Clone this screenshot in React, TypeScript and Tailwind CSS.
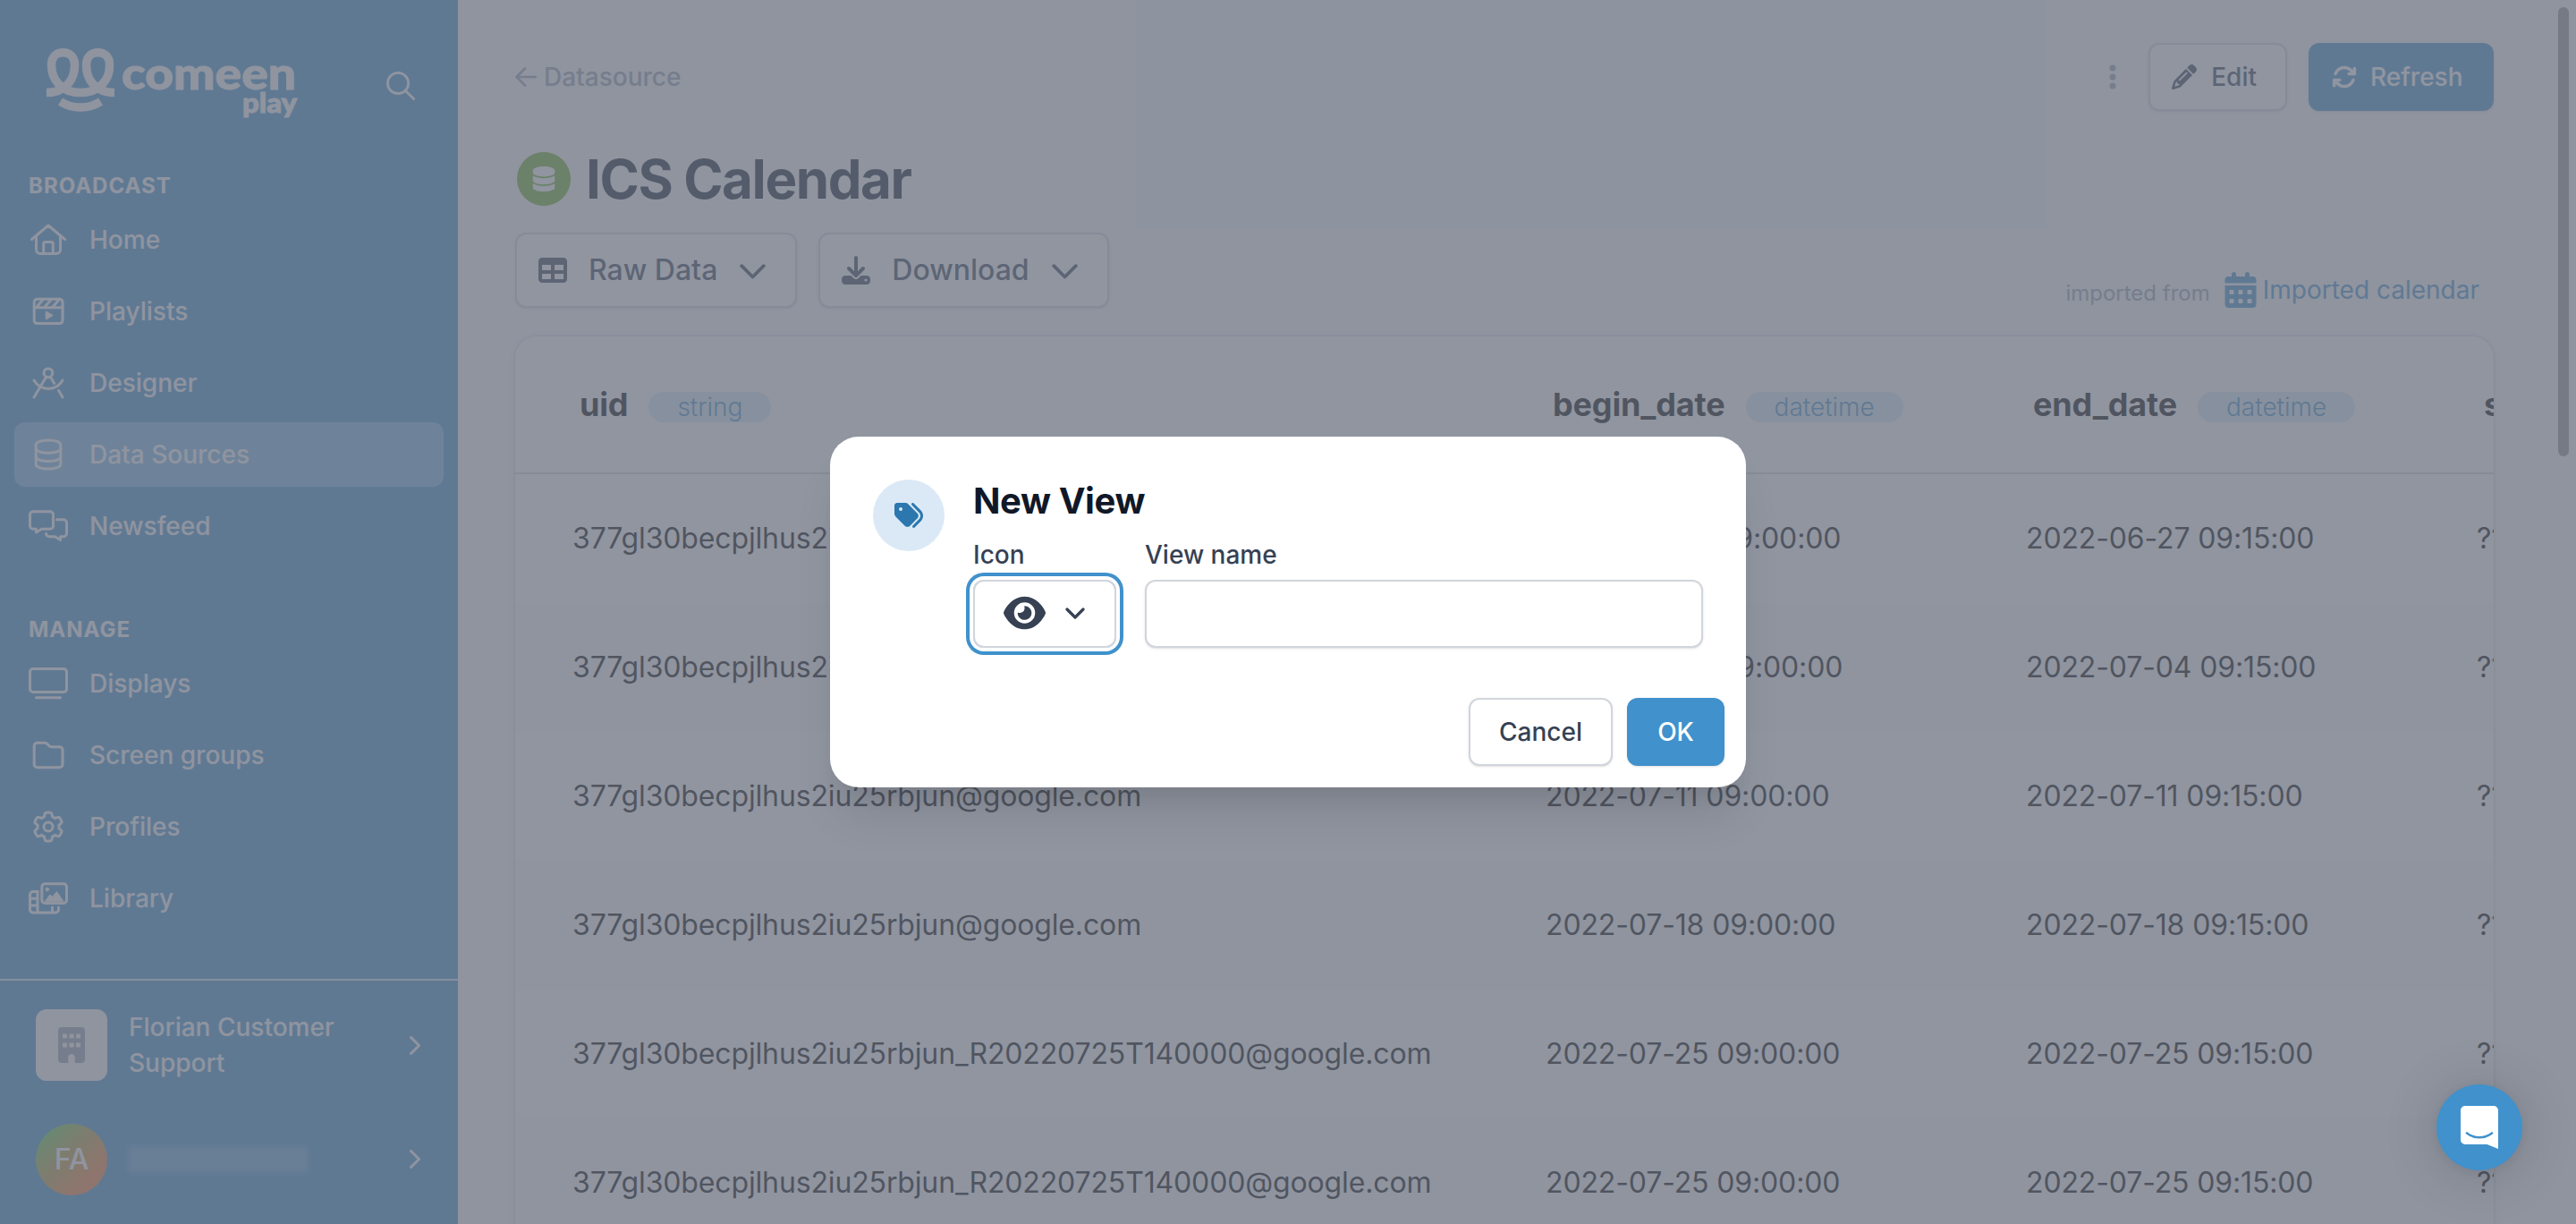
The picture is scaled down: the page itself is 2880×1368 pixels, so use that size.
import { ReactNode } from "react";
import {
  FaArrowsRotate,
  FaBuilding,
  FaCalendarDays,
  FaDatabase,
  FaDownload,
  FaEllipsisVertical,
  FaEye,
  FaGear,
  FaPencil,
  FaTable,
  FaTags,
} from "react-icons/fa6";

type NavItem = { label: string; icon: ReactNode; active?: boolean };

const broadcast: NavItem[] = [
  { label: "Home", icon: <HomeIcon /> },
  { label: "Playlists", icon: <ClapperIcon /> },
  { label: "Designer", icon: <CompassIcon /> },
  { label: "Data Sources", icon: <DatabaseIcon />, active: true },
  { label: "Newsfeed", icon: <MessagesIcon /> },
];

const manage: NavItem[] = [
  { label: "Displays", icon: <DisplayIcon /> },
  { label: "Screen groups", icon: <FolderIcon /> },
  {
    label: "Profiles",
    icon: (
      <FaGear
        className="size-8 overflow-visible"
        fill="none"
        strokeWidth={48}
      />
    ),
  },
  { label: "Library", icon: <LibraryIcon /> },
];

const columns = [
  { name: "uid", type: "string", width: "w-[1088px]" },
  { name: "begin_date", type: "datetime", width: "w-[537px]" },
  { name: "end_date", type: "datetime", width: "w-[504px]" },
  { name: "summary", type: "string", width: "w-[600px]" },
];

const shortUid = "377gl30becpjlhus2iu25rbjun@google.com";
const longUid = "377gl30becpjlhus2iu25rbjun_R20220725T140000@google.com";

const rows = [
  { uid: shortUid, date: "2022-06-27" },
  { uid: shortUid, date: "2022-07-04" },
  { uid: shortUid, date: "2022-07-11" },
  { uid: shortUid, date: "2022-07-18" },
  { uid: longUid, date: "2022-07-25" },
  { uid: longUid, date: "2022-07-25" },
];

export default function App() {
  return (
    <div className="relative flex h-[1368px] w-[2880px] overflow-hidden bg-gray-50 font-[Inter,sans-serif]">
      <Sidebar />
      <Main />
      <div className="absolute inset-0 flex items-center justify-center bg-[#6b7280]/75">
        <NewViewDialog />
      </div>
      <ChatLauncher />
    </div>
  );
}

function Sidebar() {
  return (
    <aside className="flex w-[512px] shrink-0 flex-col bg-[#4091cc] text-gray-50">
      <div className="flex h-[188px] items-start justify-between pt-[46px] pr-12 pl-[52px]">
        <Logo />
        <svg
          className="mt-[34px] size-8"
          viewBox="0 0 32 32"
          fill="none"
          stroke="currentColor"
          strokeWidth="2.8"
          strokeLinecap="round"
        >
          <circle cx="13" cy="13" r="11.6" />
          <path d="m21.4 21.4 9.2 9.2" />
        </svg>
      </div>

      <NavSection title="BROADCAST" items={broadcast} />
      <div className="h-[60px]" />
      <NavSection title="MANAGE" items={manage} />

      <div className="mt-auto border-t-2 border-[#cce2f5]">
        <div className="flex h-[144px] items-center pr-[42px] pl-10">
          <div className="flex size-20 items-center justify-center rounded-xl bg-gray-50 text-gray-400">
            <FaBuilding className="size-10" />
          </div>
          <p className="ml-6 w-[280px] text-[28px] leading-10 font-medium">
            Florian Customer Support
          </p>
          <Chevron className="ml-auto h-[21px] w-3" />
        </div>
        <div className="flex h-[128px] items-start pt-4 pr-[42px] pl-10">
          <div className="flex size-20 items-center justify-center rounded-full bg-linear-135 from-[#3fd04a] from-10% via-[#b89a3c] via-45% to-[#f5803a] to-75% text-[32px] font-medium">
            FA
          </div>
          <div className="mt-[26px] ml-6 h-7 w-[200px] bg-white/20 blur-[3px]" />
          <Chevron className="mt-[29px] ml-auto h-[21px] w-3" />
        </div>
      </div>
    </aside>
  );
}

function NavSection({ title, items }: { title: string; items: NavItem[] }) {
  return (
    <nav className="px-4">
      <h2 className="h-11 px-4 text-2xl leading-10 font-bold tracking-[1px]">
        {title}
      </h2>
      <ul className="flex flex-col gap-2">
        {items.map((item) => (
          <li
            key={item.label}
            className={`flex h-[72px] items-center rounded-xl px-4 text-[28px] font-medium ${
              item.active ? "bg-[#79b8e8]" : ""
            }`}
          >
            <span className="flex w-11 justify-center">{item.icon}</span>
            <span className="ml-6">{item.label}</span>
          </li>
        ))}
      </ul>
    </nav>
  );
}

function Main() {
  return (
    <main className="flex min-w-0 flex-1 px-16 pt-12">
      <div className="w-[2212px] shrink-0">
        <div className="flex h-[76px] items-center">
          <a className="flex items-center gap-2 text-[28px] font-medium text-gray-400">
            <svg
              className="h-[22px] w-6"
              viewBox="0 0 24 22"
              fill="none"
              stroke="currentColor"
              strokeWidth="2.6"
              strokeLinecap="round"
              strokeLinejoin="round"
            >
              <path d="M22.7 11H1.5M11 1.5 1.5 11l9.5 9.5" />
            </svg>
            Datasource
          </a>
          <FaEllipsisVertical className="ml-auto size-8 text-gray-400" />
          <button className="ml-6 flex h-[76px] items-center rounded-xl border-2 border-gray-300 bg-white px-6 text-[28px] font-medium text-gray-700 shadow-sm">
            <FaPencil className="size-7" />
            <span className="mr-2 ml-4">Edit</span>
          </button>
          <button className="ml-6 flex h-[76px] w-[207px] items-center rounded-xl bg-[#4091cc] pl-[26px] text-[28px] font-medium text-white shadow-sm">
            <FaArrowsRotate className="size-7" />
            <span className="ml-[15px]">Refresh</span>
          </button>
        </div>

        <div className="mt-[38px] flex h-[76px] items-center">
          <span className="ml-0.5 flex size-[60px] items-center justify-center rounded-full bg-[#6cae24] text-white">
            <FaDatabase className="size-7" />
          </span>
          <h1 className="ml-[17px] text-[60px] leading-none font-bold tracking-[-1.4px] text-gray-900">
            ICS Calendar
          </h1>
        </div>

        <div className="mt-[22px] flex h-[84px] items-start">
          <DropdownButton
            icon={<FaTable className="size-8" />}
            label="Raw Data"
          />
          <span className="w-6" />
          <DropdownButton
            icon={<FaDownload className="size-8" />}
            label="Download"
          />
          <div className="mt-11 mr-4 ml-auto flex h-10 items-center">
            <span className="mt-[7px] text-2xl text-gray-400">
              imported from
            </span>
            <a className="ml-[14px] flex items-center text-[28px] text-[#4091cc]">
              <FaCalendarDays className="size-10" />
              <span className="ml-[5px]">Imported calendar</span>
            </a>
          </div>
        </div>

        <div className="mt-8 h-[1100px] overflow-hidden rounded-t-3xl bg-white shadow-[0_2px_8px_rgba(0,0,0,0.08)] ring-2 ring-black/5">
          <DataTable />
        </div>
      </div>
      <div className="mt-[-40px] ml-[72px] h-[502px] w-3 shrink-0 rounded-full bg-[#929292]" />
    </main>
  );
}

function DropdownButton({ icon, label }: { icon: ReactNode; label: string }) {
  return (
    <button className="flex h-[84px] items-center rounded-xl border-2 border-gray-300 bg-white pr-[33px] pl-6 text-[32px] font-medium text-gray-700 shadow-sm">
      {icon}
      <span className="mr-[25px] ml-6">{label}</span>
      <svg
        className="mt-0.5 h-[17px] w-[29px]"
        viewBox="0 0 29 17"
        fill="none"
        stroke="currentColor"
        strokeWidth="3.8"
        strokeLinecap="round"
        strokeLinejoin="round"
      >
        <path d="m2.2 2.2 12.3 12.3L26.8 2.2" />
      </svg>
    </button>
  );
}

function DataTable() {
  return (
    <div className="w-[2729px] text-black">
      <div className="flex h-[154px] items-center border-b-2 border-gray-300">
        {columns.map((column) => (
          <div
            key={column.name}
            className={`flex shrink-0 items-baseline pl-[72px] text-4xl font-bold tracking-[-0.15px] ${column.width}`}
          >
            {column.name}
            <span className="ml-[23px] rounded-full bg-[#d9eaf6] px-8 text-[28px] leading-[34px] font-light tracking-normal text-[#4091cc]">
              {column.type}
            </span>
          </div>
        ))}
      </div>
      {rows.map((row, i) => (
        <div
          key={i}
          className="flex h-36 items-center text-[32px] tracking-[-0.14px] odd:bg-gray-50 even:bg-white"
        >
          <div className="w-[1088px] shrink-0 pl-16">{row.uid}</div>
          <div className="w-[537px] shrink-0 pl-16">{row.date} 09:00:00</div>
          <div className="w-[504px] shrink-0 pl-16">{row.date} 09:15:00</div>
          <div className="w-[600px] shrink-0 pl-16">??</div>
        </div>
      ))}
    </div>
  );
}

function NewViewDialog() {
  return (
    <div className="flex h-[392px] w-[1024px] flex-col rounded-[32px] bg-white shadow-[0_40px_50px_-10px_rgba(0,0,0,0.1),0_20px_20px_-10px_rgba(0,0,0,0.06)]">
      <div className="flex gap-8 px-12 pt-12">
        <div className="flex size-20 shrink-0 items-center justify-center rounded-full bg-[#dbe9f6] text-[#2b77ae]">
          <FaTags className="size-8" />
        </div>
        <div className="flex-1">
          <h3 className="text-[40px] leading-[48px] font-bold tracking-[-0.4px] text-gray-900">
            New View
          </h3>
          <div className="mt-4 flex gap-8 text-[28px] leading-10 font-medium text-gray-700">
            <div className="w-40">
              <p>Icon</p>
              <button className="mt-2 flex h-[76px] w-40 items-center rounded-xl border-2 border-gray-300 pb-0.5 pl-8 ring-4 ring-[#4091cc] ring-offset-4">
                <FaEye className="h-[42px] w-[47px]" />
                <svg
                  className="ml-[22px] h-[13px] w-[22px]"
                  viewBox="0 0 22 13"
                  fill="none"
                  stroke="currentColor"
                  strokeWidth="3.2"
                  strokeLinecap="round"
                  strokeLinejoin="round"
                >
                  <path d="m2 2 9 9 9-9" />
                </svg>
              </button>
            </div>
            <div className="flex-1">
              <p>View name</p>
              <input className="mt-2 block h-[76px] w-full rounded-xl border-2 border-gray-300 bg-white px-6 shadow-sm" />
            </div>
          </div>
        </div>
      </div>
      <div className="mt-auto flex justify-end gap-4 px-6 pb-6 text-[28px] font-medium">
        <button className="h-[76px] w-[161px] rounded-xl border-2 border-gray-300 bg-white text-gray-700 shadow-sm">
          Cancel
        </button>
        <button className="h-[76px] w-[109px] rounded-xl bg-[#4091cc] text-white shadow-sm">
          OK
        </button>
      </div>
    </div>
  );
}

function ChatLauncher() {
  return (
    <div className="absolute right-[60px] bottom-[60px] flex size-24 items-center justify-center rounded-full bg-[#4091cc] shadow-[0_2px_12px_rgba(0,0,0,0.06),0_4px_64px_rgba(0,0,0,0.16)]">
      <svg className="h-12 w-[42px]" viewBox="0 0 42 48">
        <path
          d="M5 0h32a5 5 0 0 1 5 5v43l-12.5-5H5a5 5 0 0 1-5-5V5a5 5 0 0 1 5-5Z"
          fill="#fff"
        />
        <path
          d="M7 30.5c8 6.3 20 6.3 28 0"
          fill="none"
          stroke="#4091cc"
          strokeWidth="2.6"
          strokeLinecap="round"
        />
      </svg>
    </div>
  );
}

function Logo() {
  return (
    <svg
      className="h-[96px] w-[284px] overflow-visible"
      viewBox="0 0 284 96"
      fill="currentColor"
      stroke="currentColor"
    >
      <g fill="none" strokeWidth="9.5">
        <path d="M0 57.5c10 0 18-3 24-9.500 5.500-6 7.500-12 7.500-21.500C31.500 17.500 26 12.700 18.500 12.700S5.500 17.500 5.500 26.500 8 42 13.500 48c6 6.500 14 9.500 24.500 9.500S56.500 54.500 62.500 48 70.500 36 70.500 26.500 65 12.700 57.500 12.700 44.500 17.500 44.500 26.500 46.500 42 52 48c6 6.500 14 9.500 24 9.500" />
        <path d="M15.5 67.5c14 8.800 31 8.800 45 0" />
      </g>
      <g fontFamily="Lato" fontWeight="900" strokeWidth="1">
        <text
          x="84"
          y="54"
          fontSize="50"
          textLength="195"
          lengthAdjust="spacingAndGlyphs"
        >
          comeen
        </text>
        <text
          x="219"
          y="80"
          fontSize="31"
          textLength="61"
          lengthAdjust="spacingAndGlyphs"
        >
          play
        </text>
      </g>
    </svg>
  );
}

function Chevron({ className }: { className?: string }) {
  return (
    <svg
      className={className}
      viewBox="0 0 12 21"
      fill="none"
      stroke="currentColor"
      strokeWidth="3"
      strokeLinecap="round"
      strokeLinejoin="round"
    >
      <path d="m1.5 1.5 9 9-9 9" />
    </svg>
  );
}

/* Outline icons of the sidebar, all on a 44x36 grid */
function NavIcon({ children }: { children: ReactNode }) {
  return (
    <svg
      className="h-9 w-11 overflow-visible"
      viewBox="0 0 44 36"
      fill="none"
      stroke="currentColor"
      strokeWidth="3"
      strokeLinecap="round"
      strokeLinejoin="round"
    >
      {children}
    </svg>
  );
}

function HomeIcon() {
  return (
    <NavIcon>
      <path d="M3.5 17.5 22 2l18.5 15.5M8.5 14v15a4.5 4.5 0 0 0 4.5 4.5h18a4.5 4.5 0 0 0 4.5-4.5V14" />
      <path d="M16.7 33V22.5a2 2 0 0 1 2-2h6.6a2 2 0 0 1 2 2V33" />
    </NavIcon>
  );
}

function ClapperIcon() {
  return (
    <NavIcon>
      <rect x="6.2" y="4.3" width="31.8" height="27.3" rx="3.5" />
      <path d="M6.2 13.7H38M9.5 12.5l6-7M18.5 12.5l6-7M27.5 12.5l6-7" />
      <path d="M19.5 18.5v8l7-4Z" fill="currentColor" strokeWidth="1.5" />
    </NavIcon>
  );
}

function CompassIcon() {
  return (
    <NavIcon>
      <circle cx="21.9" cy="6.8" r="4.9" />
      <path d="M19.5 11.5 6 34M24.5 11.5l4.2 7M33.5 26.5 38 34M6 15c7 12.5 25 12.5 32 0" />
    </NavIcon>
  );
}

function DatabaseIcon() {
  return (
    <NavIcon>
      <path d="M8.2 7v22c0 2.8 6 5 13.8 5s13.8-2.2 13.8-5V7c0-2.8-6-5-13.8-5S8.2 4.2 8.2 7Z" />
      <path d="M8.2 12c1.5 2.6 7 4.2 13.8 4.2s12.3-1.6 13.8-4.2M8.2 21.2c1.5 2.6 7 4.2 13.8 4.2s12.3-1.6 13.8-4.2" />
    </NavIcon>
  );
}

function MessagesIcon() {
  return (
    <NavIcon>
      <path d="M5 1.7h19a3.5 3.5 0 0 1 3.5 3.5v12.5a3.5 3.5 0 0 1-3.5 3.5h-9.5L8.5 25v-3.8H5a3.5 3.5 0 0 1-3.5-3.5V5.2A3.5 3.5 0 0 1 5 1.7Z" />
      <path d="M31.5 10.7H39a3.5 3.5 0 0 1 3.5 3.5v12a3.5 3.5 0 0 1-3.5 3.5h-3.5v3.8l-6-3.8h-6.5a3.5 3.5 0 0 1-3.5-3.5" />
    </NavIcon>
  );
}

function DisplayIcon() {
  return (
    <NavIcon>
      <rect x="1.5" y="1.5" width="41" height="26" rx="3.5" />
      <path d="M8.5 33.7h27" />
    </NavIcon>
  );
}

function FolderIcon() {
  return (
    <NavIcon>
      <path d="M9.7 4.2H18c1 0 1.8.3 2.5 1l2.8 2.6c.7.6 1.5 1 2.5 1h8.700A3.500 3.500 0 0 1 38 12.300v16a3.500 3.500 0 0 1-3.500 3.500H9.700a3.500 3.500 0 0 1-3.500-3.500V7.700a3.500 3.500 0 0 1 3.500-3.500Z" />
    </NavIcon>
  );
}

function LibraryIcon() {
  return (
    <NavIcon>
      <rect x="14.8" y="1.7" width="27.7" height="21.7" rx="3.5" />
      <path
        d="m18.5 21 5.5-7 2.5 2.5 5-6 7 10.5Z"
        fill="currentColor"
        strokeWidth="1"
      />
      <circle cx="20.8" cy="8" r="2.2" fill="currentColor" stroke="none" />
      <path d="M10.5 10.5H5A3.5 3.5 0 0 0 1.5 14v16.500A3.500 3.500 0 0 0 5 34h25a3.500 3.500 0 0 0 3.500-3.500V28M10 10.500V34M2 18.200h8M2 26h8M26.500 28v6" />
    </NavIcon>
  );
}
